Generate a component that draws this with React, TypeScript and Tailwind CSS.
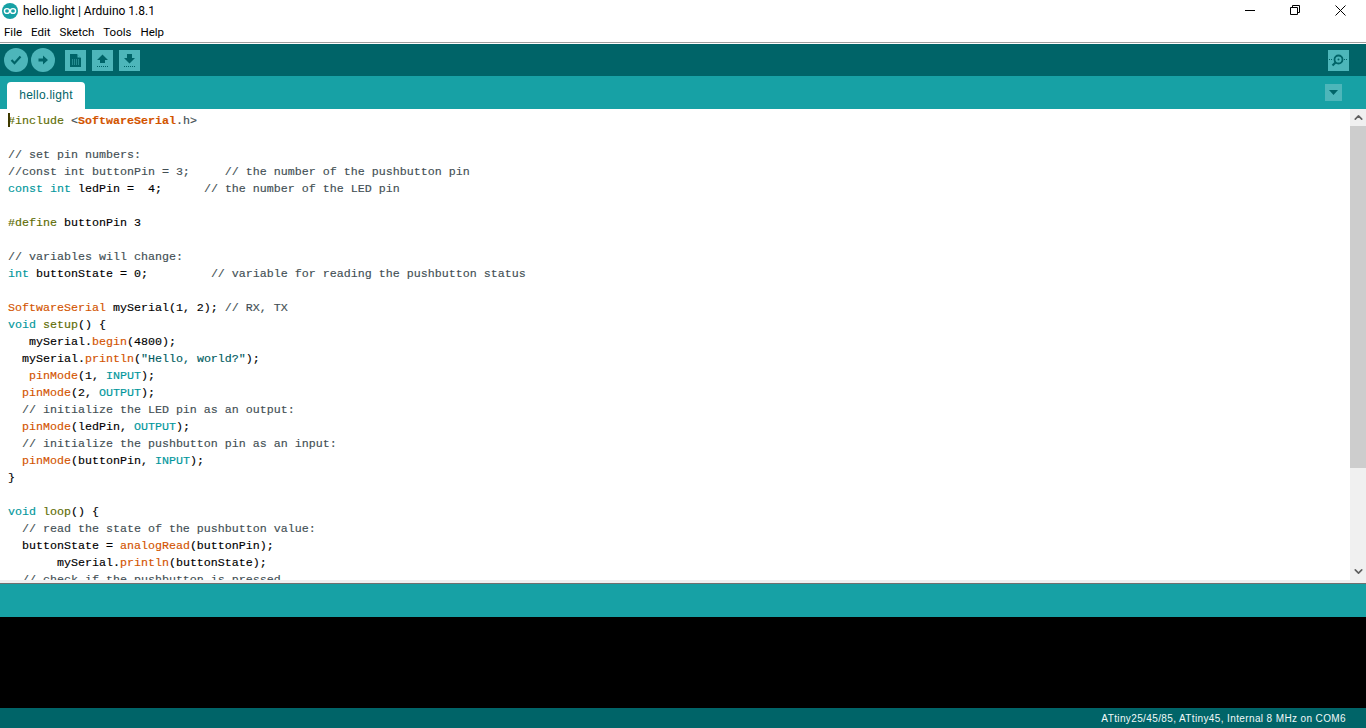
import { ChevronDown, ChevronUp } from 'lucide-react';

type Tok = [string, string?];

const K = 'text-[#00979c]';
const F = 'text-[#d35400]';
const C = 'text-[#434f54]';
const B = 'text-[#5e6d03]';
const S = 'text-[#005c5f]';

const code: Tok[][] = [
  [['#include', B], [' <', C], ['SoftwareSerial', 'text-[#d35400] font-bold'], ['.h>', C]],
  [],
  [['// set pin numbers:', C]],
  [['//const int buttonPin = 3;     // the number of the pushbutton pin', C]],
  [['const', K], [' '], ['int', K], [' ledPin =  4;      '], ['// the number of the LED pin', C]],
  [],
  [['#define', B], [' buttonPin 3']],
  [],
  [['// variables will change:', C]],
  [['int', K], [' buttonState = 0;         '], ['// variable for reading the pushbutton status', C]],
  [],
  [['SoftwareSerial', F], [' mySerial(1, 2); '], ['// RX, TX', C]],
  [['void', K], [' '], ['setup', B], ['() {']],
  [['   mySerial.'], ['begin', F], ['(4800);']],
  [['  mySerial.'], ['println', F], ['('], ['"Hello, world?"', S], [');']],
  [['   '], ['pinMode', F], ['(1, '], ['INPUT', K], [');']],
  [['  '], ['pinMode', F], ['(2, '], ['OUTPUT', K], [');']],
  [['  // initialize the LED pin as an output:', C]],
  [['  '], ['pinMode', F], ['(ledPin, '], ['OUTPUT', K], [');']],
  [['  // initialize the pushbutton pin as an input:', C]],
  [['  '], ['pinMode', F], ['(buttonPin, '], ['INPUT', K], [');']],
  [['}']],
  [],
  [['void', K], [' '], ['loop', B], ['() {']],
  [['  // read the state of the pushbutton value:', C]],
  [['  buttonState = '], ['analogRead', F], ['(buttonPin);']],
  [['       mySerial.'], ['println', F], ['(buttonState);']],
  [['  // check if the pushbutton is pressed.', C]],
];

function RoundButton({ children }: { children: React.ReactNode }) {
  return (
    <div className="w-[24px] h-[24px] rounded-full bg-[#4db6ba] flex items-center justify-center">
      <svg width="14" height="14" viewBox="0 0 14 14">{children}</svg>
    </div>
  );
}

function SquareButton({ children, className }: { children: React.ReactNode; className?: string }) {
  return (
    <div className={`w-[21px] h-[21px] bg-[#4db6ba] flex items-center justify-center ${className ?? ''}`}>
      <svg width="15" height="15" viewBox="0 0 15 15">{children}</svg>
    </div>
  );
}

export default function App() {
  return (
    <div className="w-[1366px] h-[728px] flex flex-col overflow-hidden bg-white font-['Liberation_Sans',sans-serif]">
      {/* Title bar */}
      <div className="h-[22px] flex items-center relative">
        <svg className="ml-[2px]" width="16" height="16" viewBox="0 0 16 16">
          <circle cx="8" cy="8" r="8" fill="#17a1a5" />
          <ellipse cx="5" cy="8" rx="2.6" ry="2.4" fill="none" stroke="#fff" strokeWidth="1.4" />
          <ellipse cx="11" cy="8" rx="2.6" ry="2.4" fill="none" stroke="#fff" strokeWidth="1.4" />
        </svg>
        <span className="ml-[5px] text-[12px] text-black font-['Roboto',sans-serif]">hello.light | Arduino 1.8.1</span>
        <div className="absolute top-0 right-[2px] flex">
          <div className="w-[45px] h-[20px] flex items-center justify-center">
            <div className="w-[10px] h-px bg-black" />
          </div>
          <div className="w-[45px] h-[20px] flex items-center justify-center">
            <svg width="10" height="10" viewBox="0 0 10 10" fill="none" stroke="#000">
              <path d="M.5 2.500h7v7h-7z M2.500 2.500v-2h7v7h-2" />
            </svg>
          </div>
          <div className="w-[47px] h-[20px] flex items-center justify-center">
            <svg width="11" height="11" viewBox="0 0 11 11" fill="none" stroke="#000">
              <path d="M.5.5l10 10M10.500.5l-10 10" />
            </svg>
          </div>
        </div>
      </div>

      {/* Menu */}
      <div className="h-[20px] flex items-center pl-[4px] pt-[1px] gap-[9px] text-[11.5px] text-black font-['Roboto',sans-serif]">
        <span>File</span>
        <span>Edit</span>
        <span>Sketch</span>
        <span>Tools</span>
        <span>Help</span>
      </div>
      <div className="h-px bg-[#a0a0a0]" />
      <div className="h-px bg-white" />

      {/* Toolbar */}
      <div className="h-[32px] bg-[#006468] flex items-center pl-[4px] pr-[17px]">
        <RoundButton>
          <path d="M2.500 7l3 3.200L11.500 3.500" fill="none" stroke="#006468" strokeWidth="2.200" />
        </RoundButton>
        <div className="ml-[3px]">
          <RoundButton>
            <path d="M2.500 5.500h4.500V2.500L12 7l-5 4.500v-3H2.500z" fill="#006468" />
          </RoundButton>
        </div>
        <SquareButton className="ml-[10px]">
          <path d="M2 1h7l4 4v9H2z" fill="#006468" />
          <path d="M9.500 1.200v3.300h3.300z" fill="#4db6ba" />
          <path d="M4 7h7.500M4 9h7.500M4 11h7.500" stroke="#4db6ba" strokeDasharray="1 1" />
        </SquareButton>
        <SquareButton className="ml-[6px]">
          <path d="M7.500 1.500L13 7H10v3H5V7H2z" fill="#006468" />
          <path d="M2 13.500h11" stroke="#006468" strokeDasharray="1 1" />
        </SquareButton>
        <SquareButton className="ml-[6px]">
          <path d="M5 1h5v4h3l-5.500 5.500L2 5h3z" fill="#006468" />
          <path d="M2 13.500h11" stroke="#006468" strokeDasharray="1 1" />
        </SquareButton>
        <div className="ml-auto w-[21px] h-[21px] bg-[#4db6ba] flex items-center justify-center">
          <svg width="19" height="17" viewBox="0 0 19 17" fill="none" stroke="#006468">
            <circle cx="9.500" cy="7.500" r="4" strokeWidth="1.800" />
            <circle cx="9.500" cy="7.500" r="1" fill="#006468" stroke="none" />
            <path d="M6.500 10.500l-3 3" strokeWidth="2.200" />
            <path d="M15 7.500h3M0 7.500h3" strokeDasharray="1 1" />
          </svg>
        </div>
      </div>

      {/* Tabs */}
      <div className="h-[33px] bg-[#17a1a5] flex items-end pl-[7px] pr-[24px]">
        <div className="w-[78px] h-[27px] pb-[2px] bg-white rounded-t-[4px] flex items-center justify-center text-[12px] tracking-[0.25px] text-[#006468]">
          hello.light
        </div>
        <div className="ml-auto self-center w-[17px] h-[17px] bg-[#4db6ba] flex items-center justify-center">
          <svg width="9" height="5" viewBox="0 0 9 5"><path d="M0 0h9L4.500 5z" fill="#006468" /></svg>
        </div>
      </div>

      {/* Editor */}
      <div className="h-[471px] flex overflow-hidden">
        <div className="flex-1 overflow-hidden pt-[4px] pl-[8px] relative font-['Liberation_Mono',monospace] text-[11.67px] leading-[17px] text-black [-webkit-text-stroke-width:0.15px]">
          <div className="absolute left-[8px] top-[4px] w-[2px] h-[14px] bg-[#3f3a00]" />
          {code.map((line, i) => (
            <div key={i} className="h-[17px] whitespace-pre">
              {line.map(([t, c], j) => (
                <span key={j} className={c}>{t}</span>
              ))}
            </div>
          ))}
        </div>
        <div className="w-[16px] bg-[#f0f0f0] flex flex-col">
          <div className="h-[17px] flex items-center justify-center">
            <ChevronUp size={13} strokeWidth={3} className="text-[#606060]" />
          </div>
          <div className="h-[342px] bg-[#cdcdcd]" />
          <div className="mt-auto h-[17px] flex items-center justify-center">
            <ChevronDown size={13} strokeWidth={3} className="text-[#606060]" />
          </div>
        </div>
      </div>

      {/* Divider */}
      <div className="h-[3px] bg-[#f0f0f0]" />
      <div className="h-px bg-[#707070]" />

      {/* Message area */}
      <div className="h-[33px] bg-[#17a1a5]" />
      <div className="h-[91px] bg-black" />

      {/* Status */}
      <div className="flex-1 bg-[#006468] flex items-center justify-end pr-[20px] text-[10px] tracking-[0.38px] text-[#f0f8f8]">
        ATtiny25/45/85, ATtiny45, Internal 8 MHz on COM6
      </div>
    </div>
  );
}
